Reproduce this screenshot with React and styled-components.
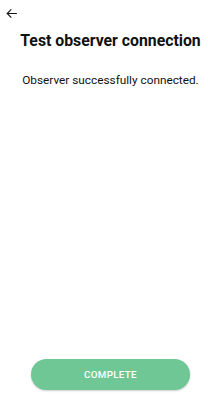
import React from "react";
import styled, { createGlobalStyle } from "styled-components";

const Global = createGlobalStyle`
  html, body { margin: 0; padding: 0; background: #fff; }
  body { font-family: Roboto, "Noto Sans", sans-serif; }
`;

const Screen = styled.div`
  width: 208px;
  height: 401px;
  display: flex;
  flex-direction: column;
  box-sizing: border-box;
  background: #fff;
`;

const TopBar = styled.div`
  height: 26px;
  display: flex;
  align-items: center;
  padding-left: 3px;
`;

const BackButton = styled.button`
  border: 0;
  background: none;
  padding: 0;
  width: 16px;
  height: 16px;
  display: flex;
  align-items: center;
  justify-content: center;
  color: #111;
`;

const Title = styled.h1`
  margin: 5px 0 0;
  font-size: 15.8px;
  font-weight: 700;
  color: #111;
  text-align: center;
  padding-left: 13px;
  line-height: 20px;
  white-space: nowrap;
`;

const Message = styled.p`
  margin: 22px 0 0;
  font-size: 11.8px;
  color: #111;
  text-align: center;
  padding-left: 13px;
  line-height: 14px;
  white-space: nowrap;
`;

const Spacer = styled.div`
  flex: 1;
`;

const Footer = styled.div`
  display: flex;
  justify-content: center;
  padding: 0 18px 11px 31px;
`;

const PrimaryButton = styled.button`
  width: 159px;
  height: 31px;
  border: 0;
  border-radius: 16px;
  background: #6fc795;
  color: #fff;
  font-family: Roboto, sans-serif;
  font-size: 9.8px;
  font-weight: 500;
  letter-spacing: 0.3px;
  box-shadow: 0 1px 2px rgba(0,0,0,0.2);
`;

export default function App() {
  return (
    <>
      <Global />
      <Screen>
        <TopBar>
          <BackButton aria-label="Back">
            <svg width="13" height="13" viewBox="0 0 24 24" fill="none" stroke="#111" strokeWidth="2" strokeLinecap="square">
              <path d="M21 12H4M11 5l-7 7 7 7" />
            </svg>
          </BackButton>
        </TopBar>
        <Title>Test observer connection</Title>
        <Message>Observer successfully connected.</Message>
        <Spacer />
        <Footer>
          <PrimaryButton>COMPLETE</PrimaryButton>
        </Footer>
      </Screen>
    </>
  );
}
